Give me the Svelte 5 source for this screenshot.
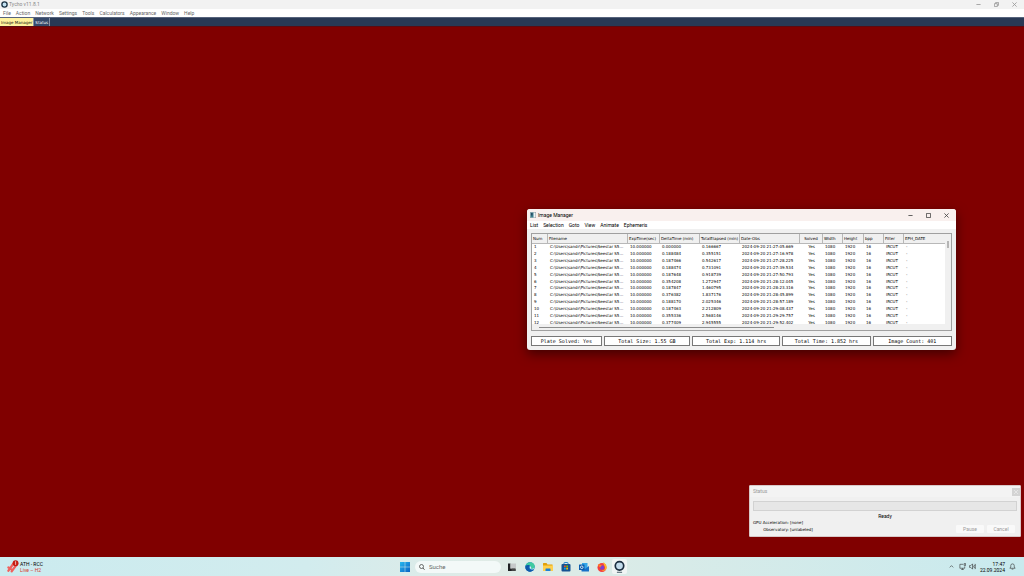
<script lang="ts">
  interface Column {
    label: string;
    width: number;
  }

  const mainMenu = [
    "File",
    "Action",
    "Network",
    "Settings",
    "Tools",
    "Calculators",
    "Appearance",
    "Window",
    "Help",
  ];
  const windowMenu = ["List", "Selection", "Goto", "View", "Animate", "Ephemeris"];

  const columns: Column[] = [
    { label: "Num", width: 16 },
    { label: "Filename", width: 80 },
    { label: "ExpTime(sec)", width: 32 },
    { label: "DeltaTime (min)", width: 40 },
    { label: "TotalElapsed (min)", width: 40 },
    { label: "Date-Obs", width: 60 },
    { label: "Solved", width: 23 },
    { label: "Width", width: 20 },
    { label: "Height", width: 21 },
    { label: "bpp", width: 20 },
    { label: "Filter", width: 20 },
    { label: "EPH_DATE", width: 41 },
  ];
  const totalWidth = columns.reduce((sum, c) => sum + c.width, 0);

  // delta, elapsed, time of observation
  const frames = [
    ["0.000000", "0.166667", "21:27:05.669"],
    ["0.188484", "0.355151", "21:27:16.978"],
    ["0.187466", "0.542617", "21:27:28.225"],
    ["0.188474", "0.731091", "21:27:39.534"],
    ["0.187648", "0.918739", "21:27:50.793"],
    ["0.354208", "1.272947", "21:28:12.045"],
    ["0.187847", "1.460795", "21:28:23.316"],
    ["0.376382", "1.837176", "21:28:45.899"],
    ["0.188170", "2.025346", "21:28:57.189"],
    ["0.187463", "2.212809", "21:29:08.437"],
    ["0.355336", "2.568146", "21:29:29.757"],
    ["0.377409", "2.945555", "21:29:52.402"],
  ];

  const totals = [
    { text: "Plate Solved: Yes", width: 71 },
    { text: "Total Size: 1.55 GB", width: 87 },
    { text: "Total Exp: 1.114 hrs", width: 89 },
    { text: "Total Time: 1.852 hrs", width: 89 },
    { text: "Image Count: 401", width: 80 },
  ];

  let activeTab = $state("Image Manager");
</script>

<div class="desktop">
  <header class="app-title">
    <svg class="app-logo" viewBox="0 0 16 16" aria-hidden="true">
      <circle cx="8" cy="8" r="6" fill="#c3e2f2" stroke="#1c3344" stroke-width="3" />
    </svg>
    <span>Tycho v11.8.1</span>
    <div class="controls main-controls">
      <button aria-label="Minimize"><svg viewBox="0 0 12 12"><path d="M1 6h10" /></svg></button>
      <button aria-label="Restore">
        <svg viewBox="0 0 12 12"><path d="M1 4h7v7H1zM4 4V1h7v7H8" /></svg>
      </button>
      <button aria-label="Close"><svg viewBox="0 0 12 12"><path d="M1 1l10 10M11 1L1 11" /></svg></button>
    </div>
  </header>

  <nav class="menu main-menu">
    {#each mainMenu as item}
      <button>{item}</button>
    {/each}
  </nav>

  <div class="tabs">
    {#each ["Image Manager", "Status"] as tab}
      <button class:active={activeTab === tab} onclick={() => (activeTab = tab)}>{tab}</button>
    {/each}
  </div>

  <main class="workspace"></main>

  <section class="window manager">
    <header class="window-title">
      <svg class="window-icon" viewBox="0 0 12 12" aria-hidden="true">
        <rect x="0.5" y="0.5" width="11" height="11" fill="#eef3f5" stroke="#8c9aa0" />
        <rect x="1" y="1" width="6" height="10" fill="#3c7f8c" />
        <rect x="2" y="2" width="3" height="5" fill="#274a63" />
      </svg>
      <span>Image Manager</span>
      <div class="controls">
        <button aria-label="Minimize"><svg viewBox="0 0 12 12"><path d="M1 6h10" /></svg></button>
        <button aria-label="Maximize"><svg viewBox="0 0 12 12"><path d="M1 1h10v10H1z" /></svg></button>
        <button aria-label="Close"><svg viewBox="0 0 12 12"><path d="M1 1l10 10M11 1L1 11" /></svg></button>
      </div>
    </header>
    <nav class="menu window-menu">
      {#each windowMenu as item}
        <button>{item}</button>
      {/each}
    </nav>

    <div class="list-frame">
      <div class="list-body">
        <div class="list-view">
          <table>
            <colgroup>
              {#each columns as column}
                <col style="width: {(column.width / totalWidth) * 100}%" />
              {/each}
            </colgroup>
            <thead>
              <tr>
                {#each columns as column}
                  <th>{column.label}</th>
                {/each}
              </tr>
            </thead>
            <tbody>
              {#each frames as [delta, elapsed, time], i}
                <tr>
                  <td>{i + 1}</td>
                  <td>C:\Users\sandr\Pictures\Seestar S5...</td>
                  <td>10.000000</td>
                  <td>{delta}</td>
                  <td>{elapsed}</td>
                  <td>2024-09-20 {time}</td>
                  <td>Yes</td>
                  <td>1080</td>
                  <td>1920</td>
                  <td>16</td>
                  <td>IRCUT</td>
                  <td>-</td>
                </tr>
              {/each}
            </tbody>
          </table>
        </div>
        <div class="scroll-y"><span></span></div>
      </div>
      <div class="scroll-x"><span></span></div>
    </div>

    <footer class="totals">
      {#each totals as total}
        <output style="flex-grow: {total.width}">{total.text}</output>
      {/each}
    </footer>
  </section>

  <section class="window status">
    <header class="status-title">
      <span>Status</span>
      <button aria-label="Close"><svg viewBox="0 0 12 12"><path d="M3 3l6 6M9 3L3 9" /></svg></button>
    </header>
    <div class="progress" role="progressbar" aria-label="Progress" aria-valuenow="0"></div>
    <p class="ready">Ready</p>
    <div class="status-foot">
      <dl>
        <dt>GPU Acceleration:</dt>
        <dd>[none]</dd>
        <dt>Observatory:</dt>
        <dd>[unlabeled]</dd>
      </dl>
      <div class="actions">
        <button disabled>Pause</button>
        <button disabled>Cancel</button>
      </div>
    </div>
  </section>

  <footer class="taskbar">
    <button class="widget">
      <svg viewBox="0 0 36 40" aria-hidden="true">
        <path d="M4 33L20 10M14 35L28 16M4 23l9 6" stroke="#f0605c" stroke-width="7" stroke-linecap="round" />
        <circle cx="26" cy="10" r="9" fill="#c61d12" />
        <path d="M26 5v10M24 7l2-2" stroke="#fff" stroke-width="2" />
      </svg>
      <span>ATH - RCC<em>Live – H2</em></span>
    </button>

    <div class="dock">
      <button aria-label="Start">
        <svg viewBox="0 0 20 20">
          <defs>
            <linearGradient id="start" x2="1" y2="1">
              <stop stop-color="#27b8ef" />
              <stop offset="1" stop-color="#0862c4" />
            </linearGradient>
          </defs>
          <path d="M0 0h9.500v9.500H0zM10.500 0H20v9.500h-9.500zM0 10.500h9.500V20H0zM10.500 10.500H20V20h-9.500z" fill="url(#start)" />
        </svg>
      </button>
      <label class="search">
        <svg viewBox="0 0 12 12" aria-hidden="true">
          <circle cx="5" cy="5" r="4" fill="none" stroke="#333" stroke-width="1.400" />
          <path d="M8 8l3 3.500" stroke="#333" stroke-width="1.600" />
        </svg>
        <input type="search" placeholder="Suche" aria-label="Suche" />
      </label>
      <button aria-label="Task view">
        <svg viewBox="0 0 20 20">
          <path d="M2 3h5v10h10v5H2z" fill="#202124" />
          <rect x="7" y="3" width="11" height="10" fill="#c6c9ca" />
          <path d="M9 13h8v5H9z" fill="#444" />
        </svg>
      </button>
      <button aria-label="Edge">
        <svg viewBox="0 0 20 20">
          <circle cx="10" cy="10" r="9.500" fill="#1275c4" />
          <path d="M1 8C3-2 19-2 19.500 9c0 5-6 6-8 4 2-3 0-6-4-6-3 0-5 0-6.500 1z" fill="#3fcba0" />
          <path d="M1 8c3-3 8-3 9 0-3 0-4 4-1 7 3 2 6 2 9 0-4 6-14 6-17-2z" fill="#1159a8" />
          <path d="M10 8c-2 3 0 6 4 7 3 0 5-2 5-4-2 3-6 3-7 2 1-2 0-4-2-5z" fill="#d8f1f1" />
        </svg>
      </button>
      <button aria-label="Explorer">
        <svg viewBox="0 0 20 20">
          <path d="M0 3q0-1 1-1h6l2 3h10v12H0z" fill="#e3a009" />
          <path d="M0 7h20v10q0 1-1 1H1q-1 0-1-1z" fill="#ffd04d" />
          <path d="M5 18v-4q0-1 1-1h8q1 0 1 1v4z" fill="#1c7fd4" />
        </svg>
      </button>
      <button aria-label="Store">
        <svg viewBox="0 0 20 20">
          <path d="M6 5V2q0-1 1-1h6q1 0 1 1v3" fill="none" stroke="#2b87cf" stroke-width="2" />
          <rect x="1" y="4" width="18" height="15" rx="2" fill="#155292" />
          <path d="M6 7h3.500v3.500H6z" fill="#f25022" />
          <path d="M10.500 7H14v3.500h-3.500z" fill="#7fba00" />
          <path d="M6 11.500h3.500V15H6z" fill="#00a4ef" />
          <path d="M10.500 11.500H14V15h-3.500z" fill="#ffb900" />
        </svg>
      </button>
      <button aria-label="Outlook">
        <svg viewBox="0 0 20 20">
          <path d="M6 2h11v12H6z" fill="#35a6e8" />
          <path d="M5 9l7 5 8-6v10q0 1-1 1H6q-1 0-1-1z" fill="#1670c8" />
          <rect x="0" y="5" width="11" height="11" rx="1" fill="#0b5cad" />
          <circle cx="5.500" cy="10.500" r="2.600" fill="none" stroke="#fff" stroke-width="1.600" />
        </svg>
      </button>
      <button aria-label="Firefox">
        <svg viewBox="0 0 20 20">
          <circle cx="10" cy="11" r="9" fill="#f53f3d" />
          <path d="M13 0c3 3 7 6 6.500 12-2 6-8 7-11 5 6 1 9-3 7-8-1-3-3-5-2.500-9z" fill="#ffb52b" />
          <circle cx="10" cy="11" r="4.500" fill="#7b3fd0" />
          <path d="M3 4c2 1 4 2 7 3-2 1-3 2-3 4-3-1-5-4-4-7z" fill="#ff8420" />
        </svg>
      </button>
      <button class="running" aria-label="Tycho">
        <svg viewBox="0 0 20 20">
          <circle cx="10" cy="9" r="6.500" fill="#c3dcec" stroke="#1b2e40" stroke-width="2.600" />
          <path d="M6 19h8" stroke="#6f7f88" stroke-width="2" />
        </svg>
      </button>
    </div>

    <div class="tray">
      <button aria-label="Hidden icons">
        <svg viewBox="0 0 16 16"><path d="M4 10l4-4 4 4" /></svg>
      </button>
      <button class="quick" aria-label="Network and volume">
        <svg viewBox="0 0 16 16"><path d="M13 8v4H2V3h8M5 15h6M8 12v3M12 1h3v5h-3z" /></svg>
        <svg viewBox="0 0 16 16"><path d="M1 6h3l4-4v12L4 10H1zM10 6q1 2 0 4M12 4q3 4 0 8M14 2q4 6 0 12" /></svg>
      </button>
      <time datetime="2024-09-22T17:47">17:47<br />22.09.2024</time>
      <button aria-label="Notifications">
        <svg viewBox="0 0 16 16"><path d="M2 12h12l-2-3V6q0-4-4-4T4 6v3zM6 14h4" /></svg>
      </button>
    </div>
  </footer>
</div>

<style>
  :global(body) {
    margin: 0;
  }

  .desktop {
    --font-ui: "DejaVu Sans", sans-serif;
    --font-shell: Roboto, "Open Sans", sans-serif;

    position: relative;
    display: flex;
    flex-direction: column;
    min-height: 100vh;
    overflow: hidden;
    background: #800000;
    font-family: var(--font-ui);
    font-size: 4px;
    line-height: 7px;
    color: #000;
  }

  button {
    margin: 0;
    padding: 0;
    border: 0;
    background: none;
    font: inherit;
    color: inherit;
    white-space: nowrap;
  }

  svg {
    display: block;
    fill: none;
  }

  .app-title,
  .menu,
  .window-title,
  .status-title,
  .ready,
  .actions,
  .taskbar {
    font-family: var(--font-shell);
    font-size: 5px;
  }

  .app-title {
    display: flex;
    align-items: center;
    gap: 1px;
    height: 9px;
    padding-left: 1px;
    background: #f2f2f2;
    color: #888;
  }

  .app-logo {
    width: 7px;
    height: 7px;
  }

  .controls {
    display: flex;
    align-items: center;
    margin-left: auto;
    padding-right: 1px;
  }

  .controls button {
    display: flex;
    justify-content: center;
    width: 18px;
  }

  .controls svg {
    width: 5px;
    height: 5px;
    stroke: #444;
    stroke-width: 2;
  }

  .main-controls svg {
    stroke: #999;
  }

  .menu {
    display: flex;
    align-items: center;
    gap: 5px;
    height: 8px;
    padding-left: 3px;
    background: #fff;
  }

  .main-menu {
    color: #666;
  }

  .tabs {
    display: flex;
    height: 9px;
    border-top: 1px solid #56637c;
    box-sizing: border-box;
    background: #293955;
    color: #fff;
  }

  .tabs button {
    padding: 0 1px;
    border-right: 1px solid #8591a6;
    background: #35496a;
  }

  .tabs .active {
    background: #fff29d;
    color: #111;
  }

  .workspace {
    flex: 1;
    border-top: 1px solid #5d0a10;
  }

  .window {
    position: absolute;
    box-sizing: border-box;
    background: #f0f0f0;
  }

  .manager {
    top: 209px;
    left: 527px;
    width: 429px;
    border-radius: 3px;
    box-shadow: 0 4px 12px rgba(0, 0, 0, 0.5);
    overflow: hidden;
  }

  .window-title {
    display: flex;
    align-items: center;
    gap: 2px;
    height: 12px;
    padding-left: 3px;
    background: #f9f0ee;
  }

  .window-icon {
    width: 6px;
    height: 6px;
  }

  .list-frame {
    margin: 4px 4px 5px;
    border: 1px solid #a0a0a0;
    background: #f0f0f0;
  }

  .list-body {
    display: flex;
  }

  .list-view {
    flex: 1;
    min-width: 0;
    height: 90px;
    overflow: hidden;
    background: #fff;
  }

  table {
    width: 100%;
    height: 92px;
    table-layout: fixed;
    border-collapse: separate;
    border-spacing: 0;
  }

  th,
  td {
    padding: 0 0 0 2px;
    font-weight: normal;
    text-align: left;
    white-space: nowrap;
    line-height: 6px;
  }

  th {
    height: 9px;
    padding-left: 1px;
    border-right: 1px solid #b8b8b8;
    border-bottom: 1px solid #b8b8b8;
    background: #f0f0f0;
  }

  th:last-child {
    border-right: 0;
  }

  th:nth-child(7),
  td:nth-child(7) {
    padding-left: 0;
    text-align: center;
  }

  .scroll-y {
    display: flex;
    justify-content: center;
    width: 6px;
    padding-top: 7px;
  }

  .scroll-y span {
    width: 2px;
    height: 7px;
    background: #b5b5b5;
  }

  .scroll-x {
    display: flex;
    align-items: center;
    height: 6px;
    padding-left: 7px;
  }

  .scroll-x span {
    width: 57%;
    height: 1px;
    background: #8c8c8c;
  }

  .totals {
    display: flex;
    gap: 2px;
    padding: 0 4px 4px;
  }

  .totals output {
    flex-basis: 0;
    border: 1px solid #777;
    background: #fff;
    font-family: "DejaVu Sans Mono", "Liberation Mono", monospace;
    font-size: 5px;
    line-height: 8px;
    text-align: center;
    white-space: nowrap;
  }

  .status {
    top: 485px;
    right: 3px;
    width: 272px;
    padding-bottom: 3px;
    border-radius: 1px;
    border: 1px solid #d8c8c8;
  }

  .status-title {
    display: flex;
    align-items: center;
    justify-content: space-between;
    height: 11px;
    padding-left: 3px;
    background: #f3f3f3;
    color: #999;
  }

  .status-title button {
    width: 8px;
    height: 8px;
    background: #d3d3d3;
  }

  .status-title svg {
    width: 8px;
    height: 8px;
    stroke: #eee;
  }

  .progress {
    height: 8px;
    margin: 4px 3px 0;
    border: 1px solid #d2d2d2;
    background: #e6e6e6;
  }

  .ready {
    margin: 2px 0 0;
    text-align: center;
    line-height: 6px;
  }

  .status-foot {
    display: flex;
    align-items: flex-end;
    justify-content: space-between;
    padding: 0 5px 0 3px;
  }

  dl {
    display: grid;
    grid-template-columns: auto auto;
    column-gap: 1px;
    margin: 0;
  }

  dt {
    text-align: right;
  }

  dd {
    margin: 0;
  }

  .actions {
    display: flex;
    gap: 3px;
  }

  .actions button {
    width: 28px;
    height: 8px;
    border-radius: 1px;
    background: #f9f9f9;
    color: #999;
  }

  .taskbar {
    display: grid;
    grid-template-columns: 1fr auto 1fr;
    align-items: center;
    height: 19px;
    background: linear-gradient(90deg, #cbebef, #d2ecee 30%, #e0ebe6 48%, #d8ebe8 65%, #c9eaee);
  }

  .widget {
    display: flex;
    align-items: center;
    gap: 1px;
    padding-left: 7px;
    text-align: left;
    line-height: 6px;
  }

  .widget svg {
    width: 12px;
    height: 13px;
  }

  .widget em {
    display: block;
    color: #d43a2e;
    font-style: normal;
  }

  .dock {
    display: flex;
    align-items: center;
    gap: 3px;
  }

  .dock button {
    display: grid;
    place-items: center;
    width: 15px;
    height: 15px;
    border-radius: 2px;
  }

  .dock button svg {
    width: 10px;
    height: 10px;
  }

  .dock .running {
    background: #f0f5f4;
  }

  .dock .running svg {
    width: 13px;
    height: 13px;
  }

  .search {
    display: flex;
    align-items: center;
    gap: 4px;
    width: 86px;
    height: 12px;
    padding-left: 4px;
    box-sizing: border-box;
    border-radius: 6px;
    background: #f3f9f8;
  }

  .search svg {
    width: 6px;
    height: 6px;
  }

  .search input {
    flex: 1;
    min-width: 0;
    padding: 0;
    border: 0;
    outline: none;
    background: none;
    font: inherit;
    font-size: 6px;
  }

  .search input::placeholder {
    color: #666;
  }

  .tray {
    display: flex;
    align-items: center;
    justify-content: flex-end;
    gap: 4px;
    padding-right: 8px;
  }

  .tray svg {
    width: 7px;
    height: 7px;
    stroke: #333;
    stroke-width: 1.4;
  }

  .quick {
    display: flex;
    gap: 3px;
  }

  .tray time {
    text-align: right;
    line-height: 6px;
  }
</style>
